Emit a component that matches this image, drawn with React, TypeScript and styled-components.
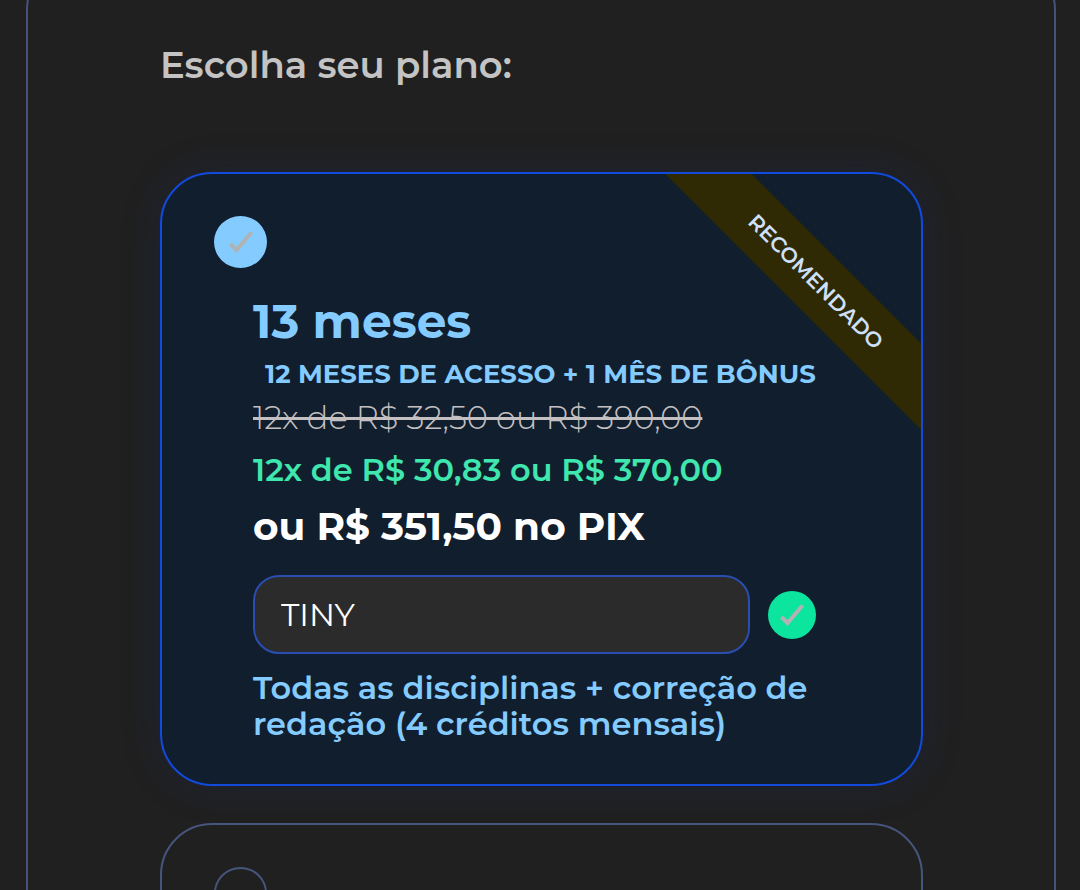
import React, { useState } from "react";
import styled, { createGlobalStyle, css } from "styled-components";

const GlobalStyle = createGlobalStyle`
  *, *::before, *::after { box-sizing: border-box; }
  body {
    margin: 0;
    background: #202020;
    font-family: Montserrat, Inter, sans-serif;
  }
`;

const Page = styled.main`
  height: 100vh;
  overflow: hidden;
  padding: 0 24px 0 26px;
`;

const Frame = styled.section`
  margin-top: -42px;
  padding: 81px 131px 52px 132px;
  border: 2px solid #46527c;
  border-radius: 52px;
`;

const Heading = styled.h1`
  margin: 0 0 83px;
  color: #c4c4c4;
  font-size: 37px;
  font-weight: 600;
  line-height: 48px;
`;

const PlanList = styled.div`
  display: flex;
  flex-direction: column;
  gap: 37px;
`;

const Card = styled.article<{ $selected?: boolean }>`
  position: relative;
  overflow: hidden;
  padding: 42px 52px;
  border: 2px solid #46557c;
  border-radius: 52px;
  background: #202020;
  ${(p) =>
    p.$selected &&
    css`
      border-color: #124add;
      background: #111e2e;
      box-shadow: 0 0 40px rgba(26, 50, 130, 0.2);
    `}
`;

const Ribbon = styled.span`
  position: absolute;
  top: 77px;
  right: -95px;
  width: 400px;
  background: #302a04;
  color: #cfe0fa;
  font-size: 21px;
  font-weight: 600;
  line-height: 61px;
  text-align: center;
  transform: rotate(45deg);
`;

const Choice = styled.label`
  display: grid;
  width: 53px;
  height: 52px;
  cursor: pointer;

  > * {
    grid-area: 1 / 1;
  }
`;

const Radio = styled.input`
  appearance: none;
  width: 53px;
  height: 52px;
  margin: 0;
  border: 2px solid #46557c;
  border-radius: 50%;
  cursor: pointer;

  &:checked {
    border-color: #84cbff;
    background: #84cbff;
  }
`;

const Tick = styled.svg`
  place-self: center;
  width: 24px;
  height: 24px;
  fill: none;
  stroke: #b0b2b3;
  stroke-width: 4;
  pointer-events: none;
`;

const Details = styled.div`
  display: flex;
  flex-direction: column;
  padding: 24px 40px 0 39px;
`;

const PlanName = styled.h2`
  margin: 0;
  color: #84cbff;
  font-size: 47px;
  font-weight: 700;
  line-height: 60px;
`;

const Bonus = styled.p`
  margin: 6px 0 0 12px;
  color: #84cbff;
  font-size: 26px;
  font-weight: 700;
  line-height: 32px;
  white-space: nowrap;
`;

const OldPrice = styled.s`
  margin-top: 8px;
  color: #c4c0c2;
  font-size: 32px;
  font-weight: 300;
  line-height: 40px;
  text-decoration-thickness: 3px;
`;

const Price = styled.strong`
  margin-top: 12px;
  color: #3fe6ad;
  font-size: 32px;
  font-weight: 600;
  line-height: 40px;
`;

const PixPrice = styled.strong`
  margin-top: 12px;
  color: #fff;
  font-size: 39px;
  font-weight: 700;
  line-height: 48px;
`;

const CouponRow = styled.div`
  display: flex;
  align-items: center;
  gap: 18px;
  margin: 25px 0 16px;
  padding-right: 13px;
`;

const Coupon = styled.input`
  flex: 1;
  min-width: 0;
  height: 79px;
  padding: 0 26px;
  border: 2px solid #2a4db0;
  border-radius: 26px;
  outline: none;
  background: #2b2b2b;
  color: #fff;
  font-family: inherit;
  font-size: 32px;
  font-weight: 400;
`;

const ApplyButton = styled.button`
  display: grid;
  place-items: center;
  width: 48px;
  height: 48px;
  padding: 0;
  border: 0;
  border-radius: 50%;
  background: #0be59d;
  cursor: pointer;
`;

const Description = styled.p`
  margin: 0;
  color: #84cbff;
  font-size: 32px;
  font-weight: 600;
  line-height: 36px;
`;

function Check() {
  return (
    <Tick viewBox="0 0 24 24" aria-hidden="true">
      <path d="M1.500 14L7.500 20L22.500 2.500" />
    </Tick>
  );
}

export default function App() {
  const [plan, setPlan] = useState("13");
  const [coupon, setCoupon] = useState("TINY");

  return (
    <>
      <GlobalStyle />
      <Page>
        <Frame>
          <Heading>Escolha seu plano:</Heading>
          <PlanList>
            <Card $selected={plan === "13"}>
              <Ribbon>RECOMENDADO</Ribbon>
              <Choice>
                <Radio
                  type="radio"
                  name="plan"
                  aria-label="13 meses"
                  checked={plan === "13"}
                  onChange={() => setPlan("13")}
                />
                {plan === "13" && <Check />}
              </Choice>
              <Details>
                <PlanName>13 meses</PlanName>
                <Bonus>12 MESES DE ACESSO + 1 MÊS DE BÔNUS</Bonus>
                <OldPrice>12x de R$ 32,50 ou R$ 390,00</OldPrice>
                <Price>12x de R$ 30,83 ou R$ 370,00</Price>
                <PixPrice>ou R$ 351,50 no PIX</PixPrice>
                <CouponRow>
                  <Coupon
                    type="text"
                    aria-label="Cupom"
                    value={coupon}
                    onChange={(e) => setCoupon(e.target.value)}
                  />
                  <ApplyButton type="button" aria-label="Aplicar cupom">
                    <Check />
                  </ApplyButton>
                </CouponRow>
                <Description>
                  Todas as disciplinas + correção de redação (4 créditos mensais)
                </Description>
              </Details>
            </Card>
            <Card $selected={plan === "other"}>
              <Choice>
                <Radio
                  type="radio"
                  name="plan"
                  aria-label="Outro plano"
                  checked={plan === "other"}
                  onChange={() => setPlan("other")}
                />
                {plan === "other" && <Check />}
              </Choice>
            </Card>
          </PlanList>
        </Frame>
      </Page>
    </>
  );
}
